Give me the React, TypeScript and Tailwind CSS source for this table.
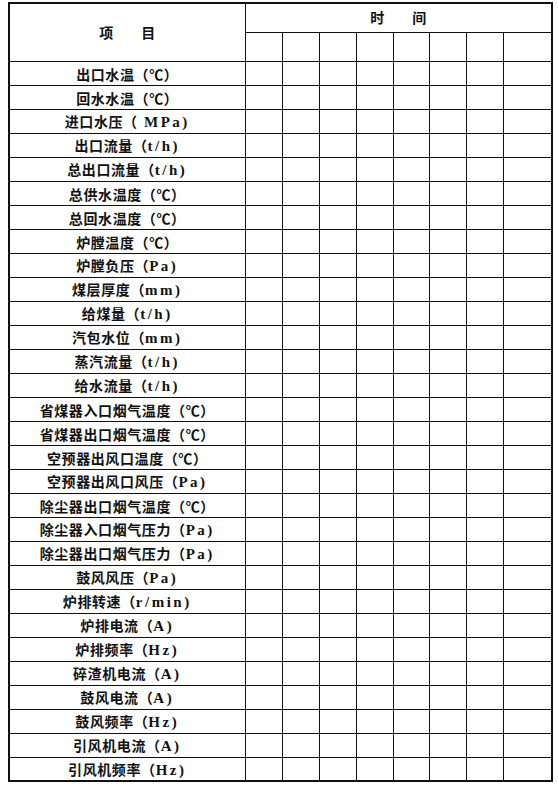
// [label, unit]; unit null means the (℃) form, set fully in CJK
const items: [string, string | null][] = [
    ['出口水温', null],
    ['回水水温', null],
    ['进口水压', ' MPa'],
    ['出口流量', 't/h'],
    ['总出口流量', 't/h'],
    ['总供水温度', null],
    ['总回水温度', null],
    ['炉膛温度', null],
    ['炉膛负压', 'Pa'],
    ['煤层厚度', 'mm'],
    ['给煤量', 't/h'],
    ['汽包水位', 'mm'],
    ['蒸汽流量', 't/h'],
    ['给水流量', 't/h'],
    ['省煤器入口烟气温度', null],
    ['省煤器出口烟气温度', null],
    ['空预器出风口温度', null],
    ['空预器出风口风压', 'Pa'],
    ['除尘器出口烟气温度', null],
    ['除尘器入口烟气压力', 'Pa'],
    ['除尘器出口烟气压力', 'Pa'],
    ['鼓风风压', 'Pa'],
    ['炉排转速', 'r/min'],
    ['炉排电流', 'A'],
    ['炉排频率', 'Hz'],
    ['碎渣机电流', 'A'],
    ['鼓风电流', 'A'],
    ['鼓风频率', 'Hz'],
    ['引风机电流', 'A'],
    ['引风机频率', 'Hz'],
];

// widths of the eight time slots, the last one is wider in the form
const slotWidths = ['w-[37px]', 'w-[37px]', 'w-[37px]', 'w-[37px]', 'w-[36px]', 'w-[37px]', 'w-[37px]', 'w-[49px]'];

const cjk = { fontFamily: '"Noto Sans CJK SC", sans-serif' };
const latin = { fontFamily: '"Liberation Serif", "Noto Sans CJK SC", serif' };

export default function App() {
    return (
        <div className="w-[558px] h-[786px] bg-white pl-[8px] pt-[2px] text-[#111]" style={cjk}>
            <table className="w-[543px] border-collapse border-2 border-[#111] table-fixed">
                <colgroup>
                    <col className="w-[236px]" />
                    {slotWidths.map((w, i) => (
                        <col key={i} className={w} />
                    ))}
                </colgroup>
                <thead>
                    <tr className="h-[29px]">
                        <th rowSpan={2} className="border border-[#111] text-[14px] font-bold">
                            项　　目
                        </th>
                        <th colSpan={8} className="border border-[#111] text-[14px] font-bold">
                            时　　间
                        </th>
                    </tr>
                    <tr className="h-[29px]">
                        {slotWidths.map((_, i) => (
                            <th key={i} className="border border-[#111]" />
                        ))}
                    </tr>
                </thead>
                <tbody>
                    {items.map(([label, unit]) => (
                        <tr key={label} className="h-[24px]">
                            <td className="border border-[#111] p-0 text-center leading-none whitespace-nowrap">
                                <span className="text-[14px] font-bold tracking-[0.6px]">
                                    {label}
                                    {unit === null ? '（℃）' : '（'}
                                </span>
                                {unit !== null && (
                                    <span
                                        className="text-[15px] font-bold tracking-[2.5px] whitespace-pre"
                                        style={latin}
                                    >
                                        {unit})
                                    </span>
                                )}
                            </td>
                            {slotWidths.map((_, i) => (
                                <td key={i} className="border border-[#111] p-0" />
                            ))}
                        </tr>
                    ))}
                </tbody>
            </table>
        </div>
    );
}
